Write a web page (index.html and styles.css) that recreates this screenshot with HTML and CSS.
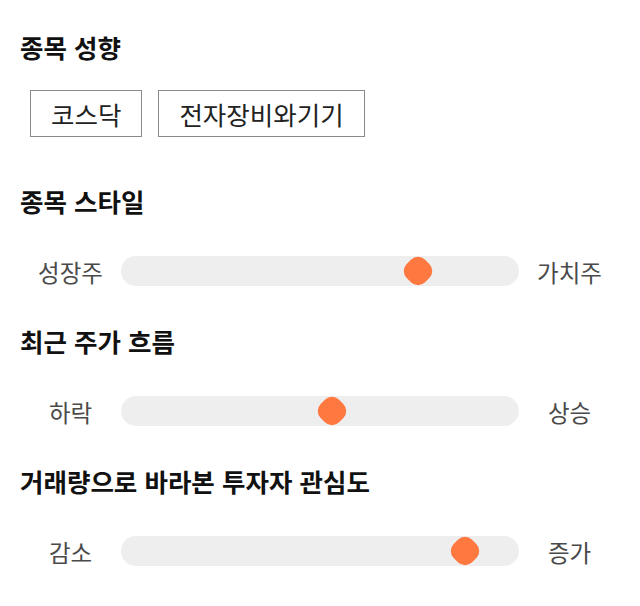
FILE: index.html
```html
<!DOCTYPE html>
<html lang="ko">
<head>
    <meta charset="UTF-8">
    <meta name="viewport" content="width=device-width, initial-scale=1.0">
    <title>종목 성향</title>
    <link rel="stylesheet" href="styles.css">
</head>
<body>
    <div class="secao">
        <h2>종목 성향</h2>
        <div class="lista-chip">
            <span class="chip">코스닥</span>
            <span class="chip">전자장비와기기</span>
        </div>
    </div>

    <div class="secao secao-barra">
        <h2>종목 스타일</h2>
        <div class="linha-barra">
            <span class="rotulo">성장주</span>
            <div class="trilho"><span class="ponto" style="left: 74.6%"></span></div>
            <span class="rotulo">가치주</span>
        </div>
    </div>

    <div class="secao secao-barra">
        <h2>최근 주가 흐름</h2>
        <div class="linha-barra">
            <span class="rotulo">하락</span>
            <div class="trilho"><span class="ponto" style="left: 53%"></span></div>
            <span class="rotulo">상승</span>
        </div>
    </div>

    <div class="secao secao-barra">
        <h2>거래량으로 바라본 투자자 관심도</h2>
        <div class="linha-barra">
            <span class="rotulo">감소</span>
            <div class="trilho"><span class="ponto" style="left: 86.4%"></span></div>
            <span class="rotulo">증가</span>
        </div>
    </div>
</body>
</html>
```

FILE: styles.css
```css
*{
    margin: 0;
    padding: 0;
    box-sizing: border-box;
}
body{
    font-family: "Noto Sans CJK KR", "Noto Sans", sans-serif;
    background-color: #fff;
    color: #111;
    padding: 31px 20px 20px 20px;
}
.secao h2{
    font-size: 25.5px;
    font-weight: bold;
    line-height: 32px;
    color: #111;
}
.lista-chip{
    display: flex;
    gap: 16px;
    margin: 27px 0 0 10px;
}
.chip{
    display: inline-block;
    border: 1px solid #8a8a8a;
    font-size: 25.5px;
    line-height: 45px;
    height: 47px;
    padding: 0 20px;
    color: #222;
}
.secao-barra{
    margin-top: 48px;
}
.secao-barra + .secao-barra{
    margin-top: 40px;
}
.linha-barra{
    display: grid;
    grid-template-columns: 101px 1fr 101px;
    align-items: center;
    margin-top: 38px;
    height: 30px;
}
.rotulo{
    font-size: 23.5px;
    color: #4a4a4a;
    text-align: center;
    line-height: 30px;
    padding-top: 2px;
}
.trilho{
    position: relative;
    height: 30px;
    background-color: #eeeeee;
    border-radius: 15px;
}
.ponto{
    position: absolute;
    top: 50%;
    width: 26px;
    height: 26px;
    background-color: #ff7840;
    border-radius: 10px;
    transform: translate(-50%, -50%) rotate(45deg);
}
```
